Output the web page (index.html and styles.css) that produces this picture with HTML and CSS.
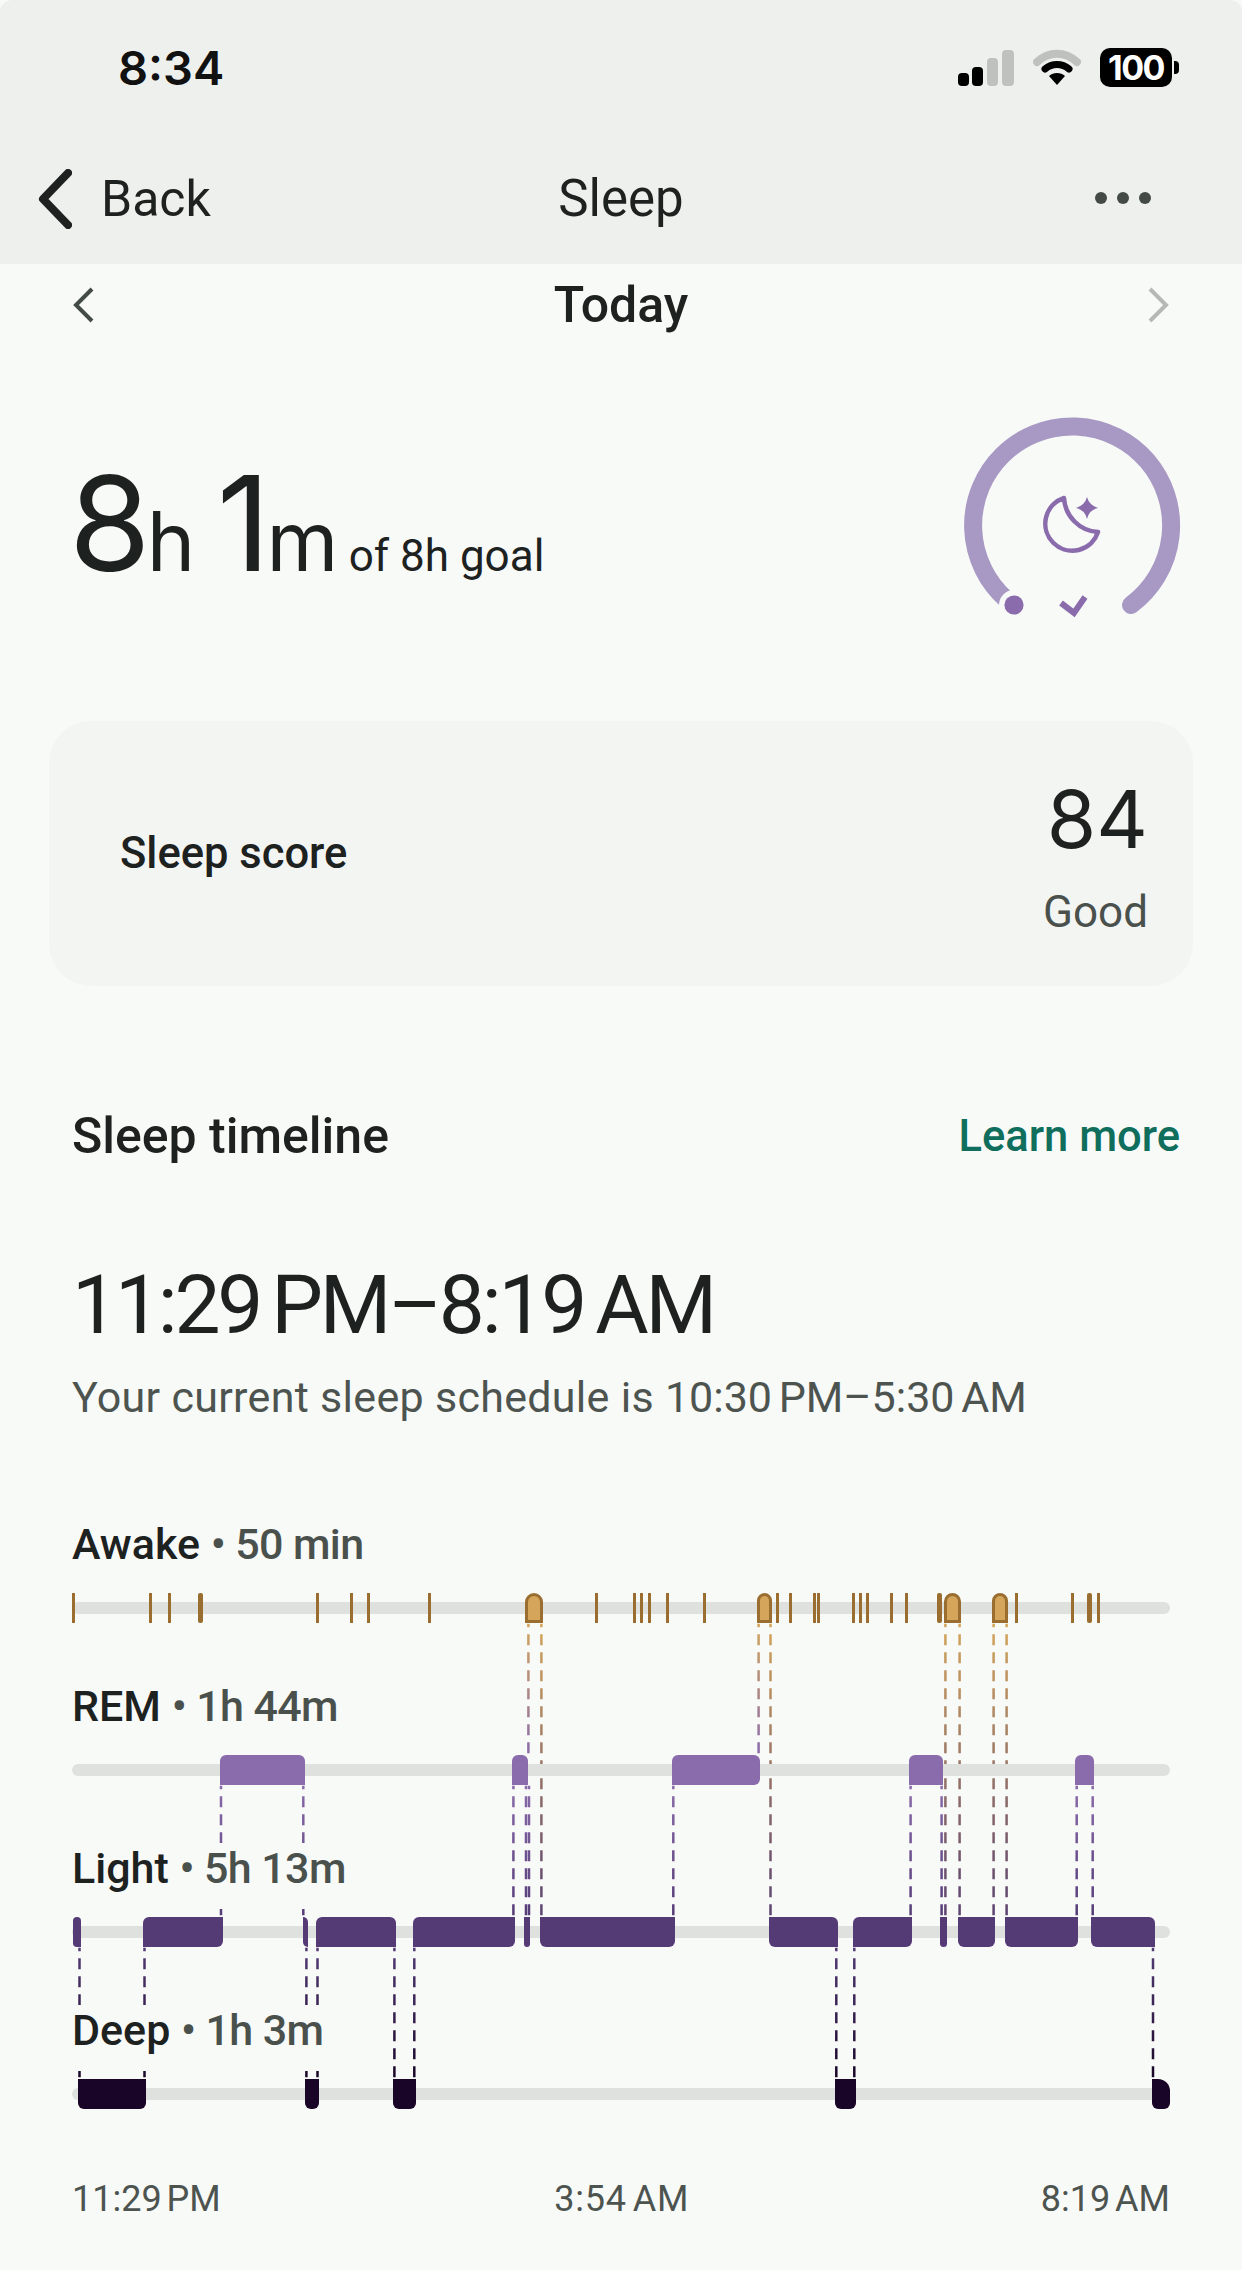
FILE: index.html
```html
<!DOCTYPE html>
<html lang="en">
<head>
<meta charset="utf-8">
<title>Sleep</title>
<link rel="stylesheet" href="styles.css">
</head>
<body>
<header class="topbar">
  <div class="status">
    <span class="clock">8:34</span>
    <div class="status-icons">
      <svg class="signal" width="56" height="36" viewBox="0 0 56 36"><rect x="0" y="23" width="11" height="13" rx="4" fill="#000"/><rect x="14" y="17" width="11" height="19" rx="4" fill="#000"/><rect x="29" y="8" width="11" height="28" rx="4" fill="#bfc1bf"/><rect x="44" y="0" width="12" height="36" rx="4" fill="#bfc1bf"/></svg>
      <svg class="wifi" width="48" height="38" viewBox="0 0 48 38"><path d="M4 14 C16 3 32 3 44 14" fill="none" stroke="#bfc1bf" stroke-width="8" stroke-linecap="round"/><path d="M12 21 C19 15 29 15 36 21" fill="none" stroke="#000" stroke-width="7" stroke-linecap="round"/><path d="M24 37 L16 28 C20 24 28 24 32 28 Z" fill="#000"/></svg>
      <div class="battery"><span class="battery-level">100</span><i class="battery-nub"></i></div>
    </div>
  </div>
  <nav class="nav">
    <div class="nav-back">
      <svg width="36" height="60" viewBox="0 0 36 60"><path d="M32 4 L7 30 L32 56" fill="none" stroke="#1d211f" stroke-width="8" stroke-linecap="round" stroke-linejoin="round"/></svg>
      <span>Back</span>
    </div>
    <div class="nav-title">Sleep</div>
    <div class="nav-more"><i></i><i></i><i></i></div>
  </nav>
</header>

<main class="content">
  <div class="date-row">
    <svg width="24" height="36" viewBox="0 0 24 36"><path d="M20 2 L4 18 L20 34" fill="none" stroke="#444b47" stroke-width="4"/></svg>
    <span class="date-label">Today</span>
    <svg width="24" height="36" viewBox="0 0 24 36"><path d="M4 2 L20 18 L4 34" fill="none" stroke="#b5b8b5" stroke-width="4"/></svg>
  </div>

  <section class="summary">
    <div class="duration">
      <span class="big">8</span><span class="unit">h</span>
      <span class="big gap">1</span><span class="unit">m</span>
      <span class="goal">of 8h goal</span>
    </div>
    <svg class="ring" width="220" height="210" viewBox="960 412 220 210">
      <path d="M1005 600 A99 99 0 1 1 1129 605" fill="none" stroke="#a898c4" stroke-width="18" stroke-linecap="round"/>
      <circle cx="1012" cy="605" r="15" fill="#f8faf8"/>
      <circle cx="1012" cy="605" r="9.6" fill="#8a6bac"/>
      <path d="M1059 603 L1072 613 L1083 597" fill="none" stroke="#8a6bac" stroke-width="6"/>
      <g transform="translate(-3 0)">
        <path d="M1065 498 A27 27 0 1 0 1099 532 A36 36 0 0 1 1065 498 Z" fill="none" stroke="#8a6bac" stroke-width="4.5" stroke-linejoin="round"/>
        <path d="M1088 497 Q1090 505 1099 508 Q1090 510 1088 519 Q1086 510 1077 508 Q1086 505 1088 497 Z" fill="#8a6bac"/>
      </g>
    </svg>
  </section>

  <section class="score-card">
    <span class="score-label">Sleep score</span>
    <div class="score-value">
      <span class="score-num">84</span>
      <span class="score-word">Good</span>
    </div>
  </section>

  <div class="timeline-head">
    <h2 class="timeline-title">Sleep timeline</h2>
    <a class="learn-more">Learn more</a>
  </div>

  <div class="range">11:29 PM–8:19 AM</div>
  <p class="schedule">Your current sleep schedule is <span class="schedule-time">10:30 PM–5:30 AM</span></p>

  <section class="chart">
    <svg class="dashes" width="1098" height="600" viewBox="72 1515 1098 600">
      <defs>
        <linearGradient id="g-aw-rem" gradientUnits="userSpaceOnUse" x1="0" y1="1622" x2="0" y2="1754"><stop offset="0" stop-color="#d4a55a"/><stop offset="1" stop-color="#8a6bab"/></linearGradient>
        <linearGradient id="g-aw-light" gradientUnits="userSpaceOnUse" x1="0" y1="1622" x2="0" y2="1916"><stop offset="0" stop-color="#d4a55a"/><stop offset="1" stop-color="#5a4272"/></linearGradient>
        <linearGradient id="g-rem-light" gradientUnits="userSpaceOnUse" x1="0" y1="1784" x2="0" y2="1916"><stop offset="0" stop-color="#8a6bab"/><stop offset="1" stop-color="#543b76"/></linearGradient>
        <linearGradient id="g-light-deep" gradientUnits="userSpaceOnUse" x1="0" y1="1946" x2="0" y2="2078"><stop offset="0" stop-color="#543b76"/><stop offset="1" stop-color="#190527"/></linearGradient>
      </defs>
      <g class="dash-aw" stroke="url(#g-aw-rem)">
        <path d="M528.4 1622.7V1754"/><path d="M758.6 1622.7V1754"/>
      </g>
      <g class="dash-aw" stroke="url(#g-aw-light)">
        <path d="M541.4 1622.7V1916"/><path d="M770.5 1622.7V1916"/><path d="M945.4 1622.7V1916"/><path d="M959.6 1622.7V1916"/><path d="M993.6 1622.7V1916"/><path d="M1006.6 1622.7V1916"/>
      </g>
      <g class="dash-rem" stroke="url(#g-rem-light)">
        <path d="M221 1784.7V1916"/><path d="M303.3 1784.7V1916"/><path d="M513.4 1784.7V1916"/><path d="M526 1784.7V1916"/><path d="M529 1784.7V1916"/><path d="M673.3 1784.7V1916"/><path d="M910.6 1784.7V1916"/><path d="M941.6 1784.7V1916"/><path d="M1076.7 1784.7V1916"/><path d="M1092.7 1784.7V1916"/>
      </g>
      <g class="dash-light" stroke="url(#g-light-deep)">
        <path d="M79.5 1946.7V2078"/><path d="M144.5 1946.7V2078"/><path d="M306.4 1946.7V2078"/><path d="M317.5 1946.7V2078"/><path d="M394.4 1946.7V2078"/><path d="M414.3 1946.7V2078"/><path d="M836.3 1946.7V2078"/><path d="M854.3 1946.7V2078"/><path d="M1153 1946.7V2078"/>
      </g>
    </svg>

    <div class="stage">
      <div class="stage-label">Awake <span class="stage-time">• 50 min</span></div>
      <div class="track">
        <i class="tick" style="left:0px"></i><i class="tick" style="left:77px"></i><i class="tick" style="left:96px"></i><i class="tick wide" style="left:126px"></i><i class="tick" style="left:244px"></i><i class="tick" style="left:278px"></i><i class="tick" style="left:295px"></i><i class="tick" style="left:356px"></i>
        <i class="awake" style="left:453px;width:18px"></i>
        <i class="tick" style="left:523px"></i><i class="tick" style="left:561px"></i><i class="tick" style="left:568px"></i><i class="tick" style="left:576px"></i><i class="tick" style="left:594px"></i><i class="tick" style="left:631px"></i>
        <i class="awake" style="left:685px;width:15px"></i>
        <i class="tick" style="left:704px"></i><i class="tick" style="left:717px"></i><i class="tick" style="left:741px"></i><i class="tick" style="left:745px"></i><i class="tick" style="left:780px"></i><i class="tick" style="left:787px"></i><i class="tick" style="left:794px"></i><i class="tick" style="left:818px"></i><i class="tick" style="left:833px"></i><i class="tick wide" style="left:865px"></i>
        <i class="awake" style="left:872px;width:17px"></i>
        <i class="awake" style="left:920px;width:16px"></i>
        <i class="tick" style="left:943px"></i><i class="tick" style="left:999px"></i><i class="tick wide" style="left:1015px"></i><i class="tick" style="left:1025px"></i>
      </div>
    </div>

    <div class="stage">
      <div class="stage-label">REM <span class="stage-time">• 1h 44m</span></div>
      <div class="track">
        <i class="bar rem" style="left:148px;width:85px"></i>
        <i class="bar rem" style="left:440px;width:16px"></i>
        <i class="bar rem rem-end" style="left:600px;width:88px"></i>
        <i class="bar rem" style="left:837px;width:34px"></i>
        <i class="bar rem" style="left:1003px;width:19px"></i>
      </div>
    </div>

    <div class="stage">
      <div class="stage-label">Light <span class="stage-time">• 5h 13m</span></div>
      <div class="track">
        <i class="bar light sq-br" style="left:1px;width:8px"></i>
        <i class="bar light sq-bl sq-tr" style="left:71px;width:80px"></i>
        <i class="bar light sq-tl sq-br" style="left:231px;width:5px"></i>
        <i class="bar light sq-bl sq-br" style="left:244px;width:80px"></i>
        <i class="bar light sq-bl sq-tr" style="left:341px;width:102px"></i>
        <i class="bar light sq-tl sq-tr" style="left:452px;width:6px"></i>
        <i class="bar light sq-tl sq-tr" style="left:468px;width:135px"></i>
        <i class="bar light sq-tl sq-br" style="left:697px;width:69px"></i>
        <i class="bar light sq-bl sq-tr" style="left:781px;width:59px"></i>
        <i class="bar light sq-tl sq-tr" style="left:868px;width:7px"></i>
        <i class="bar light sq-tl sq-tr" style="left:886px;width:37px"></i>
        <i class="bar light sq-tl sq-tr" style="left:933px;width:73px"></i>
        <i class="bar light sq-tl sq-br" style="left:1019px;width:64px"></i>
      </div>
    </div>

    <div class="stage">
      <div class="stage-label">Deep <span class="stage-time">• 1h 3m</span></div>
      <div class="track">
        <i class="bar deep" style="left:6px;width:68px"></i>
        <i class="bar deep" style="left:233px;width:14px"></i>
        <i class="bar deep" style="left:321px;width:23px"></i>
        <i class="bar deep" style="left:763px;width:21px"></i>
        <i class="bar deep deep-end" style="left:1080px;width:18px"></i>
      </div>
    </div>
  </section>

  <div class="axis">
    <span>11:29 PM</span><span class="axis-mid">3:54 AM</span><span>8:19 AM</span>
  </div>
</main>
</body>
</html>
```

FILE: styles.css
```css
* { box-sizing: border-box; }
html, body { margin: 0; padding: 0; }
body {
  width: 1242px;
  height: 2270px;
  overflow: hidden;
  background: #f8faf8;
  color: #1d211f;
  font-family: Roboto, "Open Sans", sans-serif;
}

/* top bar */
.topbar {
  height: 264px;
  background: #eef0ee;
  display: flex;
  flex-direction: column;
  border-radius: 12px 12px 0 0;
}
.status {
  height: 136px;
  padding: 46px 70px 0 118px;
  display: flex;
  justify-content: space-between;
  align-items: flex-start;
}
.clock {
  font-family: Inter, sans-serif;
  font-weight: 600;
  font-size: 47px;
  line-height: 44px;
  color: #111;
}
.status-icons { display: flex; align-items: flex-start; gap: 19px; margin-top: 2px; }
.signal { margin-top: 2px; }
.battery {
  position: relative;
  width: 72px;
  height: 39px;
  border-radius: 10px;
  background: #000;
  display: flex;
  align-items: center;
  justify-content: center;
}
.battery-level {
  font-family: Inter, sans-serif;
  font-weight: 700;
  font-size: 34px;
  line-height: 39px;
  letter-spacing: -1.5px;
  color: #fff;
}
.battery-nub {
  position: absolute;
  right: -7px;
  top: 13px;
  width: 5px;
  height: 13px;
  border-radius: 0 4px 4px 0;
  background: #000;
}
.nav {
  position: relative;
  flex: 1;
  padding: 33px 91px 0 36px;
  display: flex;
  justify-content: space-between;
  align-items: flex-start;
}
.nav-back { display: flex; align-items: center; gap: 29px; font-size: 50px; line-height: 60px; }
.nav-back svg { display: block; }
.nav-title {
  position: absolute;
  left: 0;
  right: 0;
  top: 33px;
  text-align: center;
  font-size: 51px;
  line-height: 60px;
}
.nav-more { display: flex; gap: 10px; padding-top: 23px; }
.nav-more i { width: 12px; height: 12px; border-radius: 50%; background: #444b47; }

/* date row */
.content { padding: 0 72px; }
.date-row {
  height: 58px;
  margin-top: 12px;
  display: flex;
  justify-content: space-between;
  align-items: center;
}
.date-label { font-size: 50px; font-weight: 500; line-height: 58px; }
.date-row svg { display: block; }

/* summary */
.summary {
  height: 214px;
  margin-top: 78px;
  display: flex;
  justify-content: space-between;
  align-items: flex-start;
}
.duration {
  margin-left: -3px;
  padding-top: 46px;
  white-space: nowrap;
  font-family: Inter, sans-serif;
  line-height: 130px;
}
.big { font-size: 132px; letter-spacing: -4px; }
.big.gap { margin-left: 17px; }
.unit { font-size: 82px; }
.goal { font-size: 44px; margin-left: 6px; font-family: Roboto, sans-serif; }
.ring { width: 220px; height: 210px; margin-right: -12px; }

/* score card */
.score-card {
  margin: 95px -23px 0;
  height: 265px;
  border-radius: 42px;
  background: #f3f5f3;
  padding: 0 45px 0 71px;
  display: flex;
  justify-content: space-between;
  align-items: center;
}
.score-label { font-size: 43.5px; font-weight: 500; }
.score-value { display: flex; flex-direction: column; align-items: flex-end; margin-top: 6px; }
.score-num { font-size: 80px; line-height: 96px; margin-top: -4px; font-family: Inter, sans-serif; }
.score-word { font-size: 44px; line-height: 60px; margin-top: 15px; margin-bottom: -4px; color: #4a514d; }

/* timeline heading */
.timeline-head {
  height: 60px;
  margin-top: 120px;
  display: flex;
  justify-content: space-between;
  align-items: center;
  margin-right: -10px;
}
.timeline-title { margin: 0; font-size: 50px; font-weight: 500; line-height: 60px; }
.learn-more { font-size: 43.5px; font-weight: 500; color: #0f6e5c; }
.range {
  margin-top: 91px;
  font-size: 82px;
  line-height: 96px;
  letter-spacing: -3.2px;
  word-spacing: -6px;
}
.schedule {
  margin: 16px 0 0;
  font-size: 43px;
  line-height: 56px;
  letter-spacing: 0.3px;
  color: #4d5450;
}
.schedule-time { letter-spacing: 0; word-spacing: -4px; }

/* chart */
.chart { position: relative; width: 1098px; margin-top: 91px; }
.dashes { position: absolute; left: 0; top: 0; display: block; }
.dashes path { fill: none; stroke-width: 2.5; stroke-dasharray: 11 7; stroke-dashoffset: 7.5; }
.stage { height: 162px; padding-top: 3px; }
.stage-label {
  position: relative;
  width: fit-content;
  height: 66px;
  background: #f8faf8;
  font-size: 43px;
  font-weight: 500;
  line-height: 50px;
}
.stage-time { color: #4a514d; letter-spacing: -0.6px; }
.track {
  position: relative;
  height: 12px;
  margin-top: 17px;
  border-radius: 6px;
  background: #dfe1df;
}
.tick {
  position: absolute;
  top: -9px;
  width: 3px;
  height: 30px;
  background: #9a6e30;
}
.tick.wide { width: 5px; border-radius: 2px; }
.awake {
  position: absolute;
  top: -9px;
  height: 30px;
  border: 3px solid #9a6e30;
  border-radius: 9px 9px 0 0;
  background: #d4a55a;
}
.bar {
  position: absolute;
  top: -9px;
  height: 30px;
  border-radius: 6px;
}
.rem { background: #8a6bab; border-radius: 6px 6px 0 0; }
.rem-end { border-bottom-right-radius: 6px; }
.light { background: #543b76; }
.deep { background: #190527; border-radius: 0 0 6px 6px; }
.deep-end { border-top-right-radius: 12px; }
.sq-tl { border-top-left-radius: 0; }
.sq-tr { border-top-right-radius: 0; }
.sq-bl { border-bottom-left-radius: 0; }
.sq-br { border-bottom-right-radius: 0; }

/* axis */
.axis {
  margin-top: 13px;
  width: 1098px;
  display: flex;
  justify-content: space-between;
  font-size: 36px;
  line-height: 44px;
  word-spacing: -4px;
  color: #4d5450;
}
.axis-mid { margin-right: 18px; letter-spacing: 0.8px; }
```
